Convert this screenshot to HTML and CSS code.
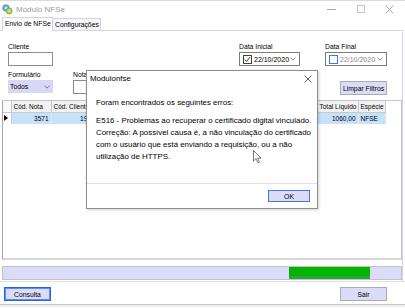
FILE: index.html
```html
<!DOCTYPE html>
<html lang="pt-BR">
  <head>
    <meta charset="UTF-8" />
    <meta name="viewport" content="width=device-width, initial-scale=1.0" />
    <title>Módulo NFSe</title>
    <link rel="stylesheet" href="styles.css">
  </head>
  <body>
    <div class="window">
      <div class="titlebar">
        <svg class="app-icon" viewBox="0 0 11 11">
          <circle cx="4" cy="4" r="3.2" fill="#6fb7e8" stroke="#3a7fb8" stroke-width="0.8" />
          <circle cx="7.2" cy="7" r="3" fill="#b8d860" stroke="#6e9a2a" stroke-width="0.8" />
          <circle cx="4" cy="4" r="1" fill="#fff" />
          <circle cx="7.2" cy="7" r="0.9" fill="#f4e070" />
        </svg>
        <span class="title">Módulo NFSe</span>
        <div class="controls">
          <span class="ctl"><span class="ctl-min"></span></span>
          <span class="ctl"><span class="ctl-max"></span></span>
          <span class="ctl">
            <svg class="ctl-close" viewBox="0 0 9 9">
              <path d="M0.5 0.5 L8.5 8.5 M8.5 0.5 L0.5 8.5" stroke="#a0a0a0" stroke-width="0.9" />
            </svg>
          </span>
        </div>
      </div>

      <div class="tabs">
        <div class="tab tab-active">Envio de NFSe</div>
        <div class="tab tab-config">Configurações</div>
      </div>

      <div class="panel">
        <div class="filters">
          <div class="row">
            <div class="field f-cliente">
              <label>Cliente</label>
              <div class="input"></div>
            </div>
            <div class="field f-dataini">
              <label>Data Inicial</label>
              <div class="date">
                <span class="check checked">
                  <svg viewBox="0 0 8 8"><path d="M1 4 L3 6.2 L7 1.2" stroke="#222" stroke-width="1" fill="none" /></svg>
                </span>
                <span class="date-text">22/10/2020</span>
                <svg class="chev" viewBox="0 0 7 4"><path d="M0.5 0.5 L3.5 3.3 L6.5 0.5" stroke="#555" stroke-width="0.8" fill="none" /></svg>
              </div>
            </div>
            <div class="field f-datafim">
              <label>Data Final</label>
              <div class="date">
                <span class="check unchecked"></span>
                <span class="date-text muted">22/10/2020</span>
                <svg class="chev" viewBox="0 0 7 4"><path d="M0.5 0.5 L3.5 3.3 L6.5 0.5" stroke="#555" stroke-width="0.8" fill="none" /></svg>
              </div>
            </div>
          </div>
          <div class="row">
            <div class="field f-form">
              <label>Formulário</label>
              <div class="select">
                <span>Todos</span>
                <svg class="chev" viewBox="0 0 7 4"><path d="M0.5 0.5 L3.5 3.3 L6.5 0.5" stroke="#555" stroke-width="0.8" fill="none" /></svg>
              </div>
            </div>
            <div class="field f-nota">
              <label>Nota</label>
              <div class="input"></div>
            </div>
            <button class="btn btn-limpar">Limpar Filtros</button>
          </div>
        </div>

        <div class="grid">
          <table>
            <colgroup>
              <col style="width:8px" />
              <col style="width:40px" />
              <col style="width:46px" />
              <col style="width:120px" />
              <col style="width:50px" />
              <col style="width:50px" />
              <col style="width:41px" />
              <col style="width:27px" />
            </colgroup>
            <thead>
              <tr>
                <th class="ind"></th>
                <th>Cód. Nota</th>
                <th>Cód. Cliente</th>
                <th></th>
                <th></th>
                <th></th>
                <th>Total Líquido</th>
                <th>Espécie</th>
              </tr>
            </thead>
            <tbody>
              <tr>
                <td class="ind"><span class="pointer"></span></td>
                <td class="num">3571</td>
                <td class="num">1904</td>
                <td></td>
                <td></td>
                <td></td>
                <td class="num">1060,00</td>
                <td>NFSE</td>
              </tr>
            </tbody>
          </table>
        </div>

        <div class="progress">
          <div class="progress-fill"></div>
        </div>
      </div>

      <div class="footer">
        <button class="btn btn-focus">Consulta</button>
        <button class="btn btn-sair">Sair</button>
      </div>
      <div class="bottom-edge"></div>

      <div class="dialog">
        <div class="dlg-title">
          <span>Modulonfse</span>
          <svg class="dlg-close" viewBox="0 0 8 8">
            <path d="M0.5 0.5 L7.5 7.5 M7.5 0.5 L0.5 7.5" stroke="#333" stroke-width="0.8" />
          </svg>
        </div>
        <div class="dlg-body">
          <p>Foram encontrados os seguintes erros:</p>
          <p class="gap">E516 - Problemas ao recuperar o certificado digital vinculado.<br />Correção: A possível causa é, a não vinculação do certificado<br />com o usuário que está enviando a requisição, ou a não<br />utilização de HTTPS.</p>
        </div>
        <div class="dlg-footer">
          <button class="btn btn-ok">OK</button>
        </div>
      </div>

      <svg class="cursor" viewBox="0 0 10 14">
        <path d="M0.5 0.5 L0.5 11 L3 8.6 L4.8 12.8 L6.4 12.1 L4.7 8.1 L8 8.1 Z" fill="#fff" stroke="#555" stroke-width="0.8" stroke-linejoin="round" />
      </svg>
    </div>
  </body>
</html>
```

FILE: styles.css
```css
* {
  box-sizing: border-box;
}
body {
  margin: 0;
  padding: 0;
  font-family: "Liberation Sans", Arial, sans-serif;
  font-size: 6.8px;
  color: #000;
  background: #fff;
}

.window {
  position: relative;
  width: 405px;
  height: 308px;
  overflow: hidden;
  background: #fff;
}

/* barra de titulo */
.titlebar {
  height: 17px;
  display: flex;
  align-items: center;
  padding-left: 2px;
  border-top: 1px solid #dcdcdc;
}
.app-icon {
  width: 11px;
  height: 11px;
  margin-right: 3px;
}
.title {
  font-size: 8px;
  color: #9c9c9c;
}
.controls {
  margin-left: auto;
  margin-right: 1px;
  display: flex;
}
.ctl {
  width: 29px;
  height: 15px;
  display: flex;
  align-items: center;
  justify-content: center;
}
.ctl-min {
  width: 9px;
  height: 1px;
  background: #a8a8a8;
}
.ctl-max {
  width: 8px;
  height: 8px;
  border: 1px solid #c4c4c4;
}
.ctl-close {
  width: 9px;
  height: 9px;
}

/* abas */
.tabs {
  height: 13px;
  display: flex;
  align-items: flex-end;
  padding-left: 2px;
}
.tab {
  height: 12px;
  line-height: 11px;
  padding-left: 2px;
  border: 1px solid #d2d2dc;
  border-bottom: none;
  background: #f6f6f6;
  white-space: nowrap;
}
.tab-active {
  width: 51px;
  height: 14px;
  margin-bottom: -1px;
  background: #fff;
  position: relative;
}
.tab-config {
  width: 48px;
  border-left: none;
}

/* painel */
.panel {
  width: 403px;
  border-top: 1px solid #d4d4ec;
  border-right: 1px solid #d4d4ec;
  padding: 0 0 1px 2px;
}

.filters {
  padding: 10px 0 0 6px;
}
.row {
  display: flex;
  align-items: flex-end;
}
.row + .row {
  margin-top: 3px;
}
.field label {
  display: block;
  height: 11px;
  line-height: 11px;
  white-space: nowrap;
}
.input {
  height: 14px;
  border: 1px solid #8c8c8c;
  background: #fff;
}
.f-cliente,
.f-form {
  width: 45px;
}
.f-dataini {
  width: 61px;
  margin-left: 186px;
}
.f-datafim {
  width: 62px;
  margin-left: 25px;
}
.f-nota {
  width: 60px;
  margin-left: 20px;
}

.date {
  height: 14px;
  display: flex;
  align-items: center;
  border: 1px solid #7e7e70;
  padding-left: 3px;
  font-size: 7px;
}
.check {
  width: 9px;
  height: 9px;
  margin-right: 2px;
  display: flex;
  align-items: center;
  justify-content: center;
}
.check svg {
  width: 7px;
  height: 7px;
}
.checked {
  border: 1px solid #444;
}
.unchecked {
  border: 1px solid #3a7ae0;
}
.date-text.muted {
  color: #8a8a8a;
}
.chev {
  width: 6px;
  height: 4px;
  margin-left: auto;
  margin-right: 3px;
}

.select {
  height: 13px;
  display: flex;
  align-items: center;
  padding-left: 2px;
  background: #d8d8f6;
  margin-bottom: 1px;
}

.btn {
  font-family: "Liberation Sans", Arial, sans-serif;
  font-size: 6.8px;
  height: 14px;
  padding: 0;
  border: 1px solid #acacac;
  background: #dcdcf8;
  color: #000;
  text-align: center;
}
.btn-limpar {
  width: 47px;
  margin-left: 207px;
  margin-bottom: -1px;
}

/* grade */
.grid {
  margin-top: 6px;
  height: 160px;
  border: 1px solid #c4c4c4;
  border-left-color: #a4a4a4;
  border-bottom: 2px solid #d8d8d8;
  overflow: hidden;
}
table {
  border-collapse: collapse;
  table-layout: fixed;
  width: 382px;
  font-size: 6.5px;
}
th,
td {
  padding: 0 2px;
  white-space: nowrap;
  overflow: hidden;
}
th {
  height: 11px;
  font-weight: normal;
  text-align: left;
  background: #f2f2f2;
  border-right: 1px solid #cacaca;
  border-bottom: 1px solid #cacaca;
}
td {
  height: 12px;
  background: #c6e2fa;
  border-right: 1px solid #dbe9f7;
}
td.num {
  text-align: right;
}
th.ind {
  background: #fafafa;
}
td.ind {
  background: #fff;
  padding: 0 0 0 1px;
  border-right: 1px solid #cacaca;
}
.pointer {
  display: block;
  width: 0;
  height: 0;
  border-top: 3.5px solid transparent;
  border-bottom: 3.5px solid transparent;
  border-left: 4px solid #000;
}

/* progresso */
.progress {
  margin-top: 6px;
  height: 14px;
  border: 1px solid #c2c2c8;
  background: #dcdcfa;
}
.progress-fill {
  margin-left: 286px;
  width: 81px;
  height: 100%;
  background: linear-gradient(#00b400 0%, #00b400 78%, #27a63a 78%, #27a63a 100%);
}

/* rodape */
.footer {
  height: 23px;
  border-top: 1px solid #e2e2e2;
  display: flex;
  align-items: flex-start;
  padding-top: 5px;
}
.btn-focus {
  width: 47px;
  margin-left: 4px;
  border: 1px solid #1f66e6;
  box-shadow: inset 0 0 0 1px #5a8ef0;
}
.btn-sair {
  width: 47px;
  margin-left: auto;
  margin-right: 18px;
}
.bottom-edge {
  height: 3px;
  border-top: 1px solid #c8c8c8;
  background: #f0f0f0;
}

/* caixa de mensagem */
.dialog {
  position: absolute;
  left: 86px;
  top: 70px;
  width: 232px;
  height: 139px;
  border: 1px solid #8e8e8e;
  background: #fff;
  box-shadow: 1px 1px 3px rgba(0, 0, 0, 0.18);
  display: flex;
  flex-direction: column;
  font-size: 7.9px;
}
.dlg-title {
  height: 15px;
  display: flex;
  align-items: center;
  padding-left: 3px;
}
.dlg-close {
  width: 8px;
  height: 8px;
  margin-left: auto;
  margin-right: 5px;
}
.dlg-body {
  flex: 1;
  padding: 11px 4px 0 9px;
}
.dlg-body p {
  margin: 0;
  line-height: 12px;
  white-space: nowrap;
}
.dlg-body p.gap {
  margin-top: 6px;
}
.dlg-footer {
  height: 25px;
  border-top: 1px solid #e0e0ee;
  display: flex;
  justify-content: flex-end;
  padding: 6px 7px 0 0;
}
.btn-ok {
  width: 42px;
  height: 12px;
  font-size: 7px;
  border: 1px solid #3c7ae6;
}

.cursor {
  position: absolute;
  left: 253px;
  top: 150px;
  width: 10px;
  height: 14px;
}
```
